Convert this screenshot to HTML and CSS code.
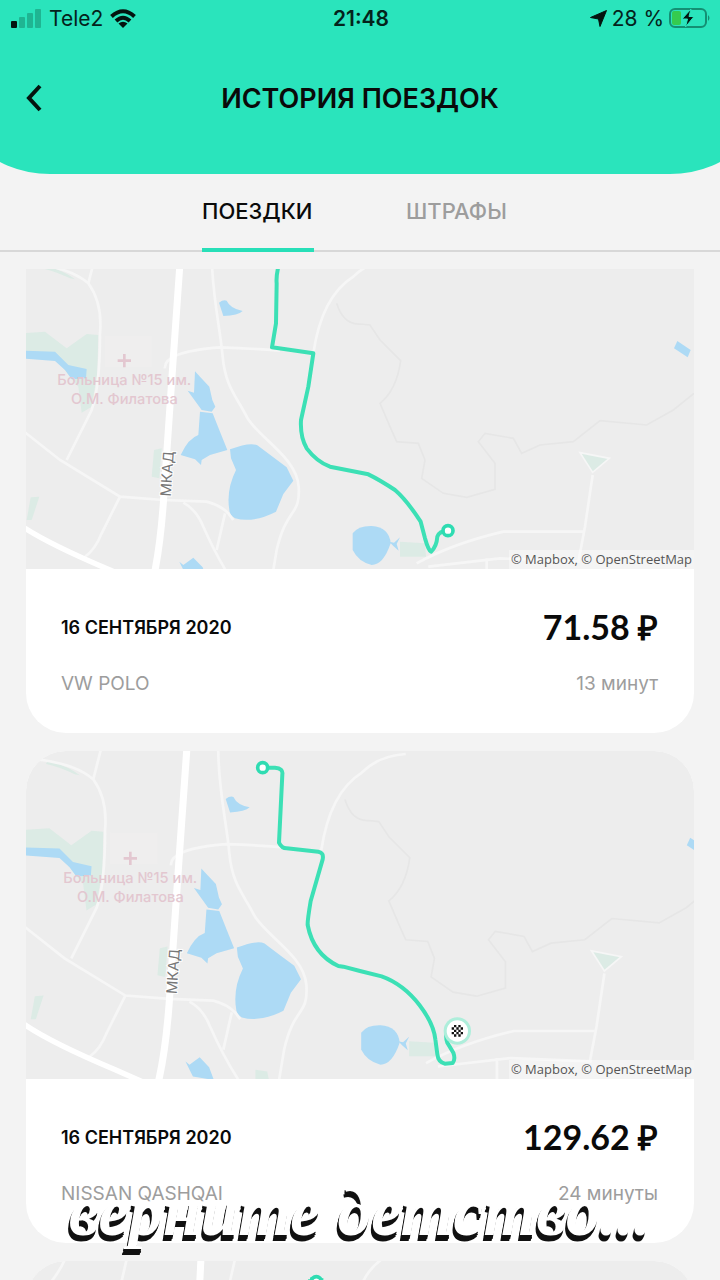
FILE: index.html
```
<!DOCTYPE html>
<html lang="ru">

<head>
    <meta charset="UTF-8">
    <meta name="viewport" content="width=device-width, initial-scale=1.0">
    <title>История поездок</title>
    <link rel="stylesheet" href="styles.css">
</head>

<body>
    <div class="app">
        <header class="header">
            <!-- Status bar -->
            <div class="status-bar">
                <div class="status-left">
                    <svg width="31" height="19" viewBox="0 0 31 19">
                        <rect x="0" y="12" width="6" height="7" rx="1" fill="#04140f" />
                        <g fill="#1fb592">
                            <rect x="8" y="8" width="6" height="11" rx="1" />
                            <rect x="16" y="4" width="6" height="15" rx="1" />
                            <rect x="24" y="0" width="6" height="19" rx="1" />
                        </g>
                    </svg>
                    <span>Tele2</span>
                    <svg width="26" height="19" viewBox="0 0 26 19">
                        <g fill="none" stroke="#04140f" stroke-width="4">
                            <path d="M1.500 7.500 Q13 -3 24.500 7.500" />
                            <path d="M6 12 Q13 5.500 20 12" />
                        </g>
                        <path d="M8.500 14.500 Q13 11 17.500 14.500 L13 19 Z" fill="#04140f" />
                    </svg>
                </div>
                <span class="status-time">21:48</span>
                <div class="status-right">
                    <svg width="17" height="17" viewBox="0 0 17 17">
                        <path d="M16.500 0.500 L10 16.500 L8.500 9 L0.500 7.500 Z" fill="#04140f" stroke="#04140f" stroke-width="1" stroke-linejoin="round" />
                    </svg>
                    <span>28 %</span>
                    <svg width="42" height="20" viewBox="0 0 42 20">
                        <rect x="1" y="1" width="36" height="18" rx="5" fill="none" stroke="#148f73" stroke-width="2" />
                        <path d="M39 7 Q42 10 39 13 Z" fill="#148f73" />
                        <rect x="3" y="3" width="9" height="14" rx="2" fill="#35cb4f" />
                        <path d="M22 1 L13 11 H18.500 L16.500 19 L25 8.500 H20 Z" fill="#04140f" stroke="#28e5bc" stroke-width="1" />
                    </svg>
                </div>
            </div>

            <div class="title-bar">
                <button class="back-btn" aria-label="Назад">
                    <svg width="16" height="28" viewBox="0 0 16 28">
                        <path d="M14 2 L3 14 L14 26" fill="none" stroke="#04140f" stroke-width="4" />
                    </svg>
                </button>
                <h1>ИСТОРИЯ ПОЕЗДОК</h1>
            </div>
        </header>

        <nav class="tabs">
            <button class="tab active">ПОЕЗДКИ</button>
            <button class="tab">ШТРАФЫ</button>
        </nav>

        <!-- Trips list -->
        <main class="trips">
            <article class="trip first">
                <div class="map">
                    <svg viewBox="18 27 2004 900">
                        <defs>
                            <g id="terrain">
                                <!-- parks -->
                                <g fill="#dcebe5">
                                    <path d="M0 220 L75 215 L140 265 L200 222 L235 225 L232 340 L215 440 L185 458 L175 380 L110 300 L0 290 Z" />
                                    <path d="M402 570 L425 565 L418 655 L395 650 Z" />
                                    <path d="M32 712 L58 710 L35 780 L20 780 Z" />
                                    <path d="M70 16 Q130 30 165 58 L150 55 Q100 32 65 25 Z" />
                                    <path d="M1140 845 L1215 850 L1218 890 L1140 890 Z" />
                                    <path d="M1680 578 L1768 595 L1718 637 Z" stroke="#f6f6f6" stroke-width="5" />
                                    <path d="M685 930 L720 935 L725 960 L685 960 Z" />
                                </g>
                                <path d="M255 228 H395 V320 H255 Z" fill="#efeeee" />
                                <!-- water -->
                                <g fill="#addaf5">
                                    <path d="M0 272 L105 275 L145 315 L200 327 L198 355 L155 358 L135 330 L105 303 L0 295 Z" />
                                    <path d="M597 128 Q610 118 620 122 Q630 145 668 153 Q655 166 610 168 Z" />
                                    <path d="M525 334 L540 350 L568 380 L577 420 L586 440 L575 455 L545 450 L527 425 L503 392 L522 398 Z" />
                                    <path d="M540 455 L578 460 L600 515 L622 570 L570 585 L545 600 L543 615 L525 598 L482 585 Q505 535 535 525 Z" />
                                    <path d="M630 568 Q690 545 712 556 L760 592 L800 622 L820 662 L790 702 L768 755 Q700 790 645 775 Q628 765 628 750 Q618 690 648 630 L633 595 Z" />
                                    <path d="M478 905 L490 915 L520 893 L548 922 L562 960 L500 950 Z" />
                                    <path d="M998 820 Q1015 797 1055 798 Q1108 802 1112 850 Q1090 915 1055 915 Q1015 905 998 870 Z" />
                                    <path d="M1108 845 L1122 848 L1140 832 L1130 852 L1136 872 L1120 858 Z" />
                                    <path d="M1972 243 L2012 270 L2003 292 L1962 265 Z" />
                                </g>
                                <!-- paths -->
                                <path class="trail" d="M950 130 Q970 195 1020 192 L1050 195 L1080 240 L1142 302 Q1130 390 1080 430 L1110 500 L1130 545 L1195 550 L1215 600 L1205 655 L1270 700 L1340 712 L1425 688 L1425 610 L1375 545 L1395 520 L1480 535 L1505 580 L1560 555 L1660 545 L1740 482 L1880 495 L1960 450 L2022 400" />
                                <!-- roads -->
                                <g class="road">
                                    <path d="M30 10 Q150 22 205 70 Q248 130 240 220 Q240 380 215 450 L140 600" />
                                    <path d="M205 70 L228 -20" />
                                    <path d="M0 505 L120 600 L300 710 L430 720 L560 725 Q600 735 625 760 L640 780" />
                                    <path d="M300 710 L245 820 Q225 870 195 890" />
                                    <path d="M490 728 Q530 750 550 800 Q590 890 635 960" />
                                    <path d="M615 760 L590 870" />
                                    <path d="M575 -20 C575 100 600 200 608 290 S650 410 680 470 S830 590 836 680 S800 740 770 870 L755 960" />
                                    <path d="M435 325 Q430 275 600 262 Q690 265 780 272" />
                                    <path d="M880 280 Q905 110 1000 50 Q1050 0 1130 -5" />
                                    <path d="M1190 910 Q1300 850 1450 815 L1690 815" />
                                    <path d="M1718 645 L1695 800 L1675 905" />
                                    <path d="M1225 920 L1440 895 L1680 905 M1400 895 V960" />
                                </g>
                                <path class="road wide" d="M0 795 Q80 850 270 930 L350 965" />
                                <path class="road highway" d="M482 -20 Q470 150 458 320 L432 700 Q422 860 398 965" />
                            </g>
                            <g id="labels">
                                <path d="M313 282 V322 M293 302 H333" stroke="#e3c7d0" stroke-width="8" />
                                <text class="hospital" x="313" y="376">Больница №15 им.</text>
                                <text class="hospital" x="313" y="432">О.М. Филатова</text>
                                <text class="road-name" transform="translate(452 710) rotate(-86)">МКАД</text>
                            </g>
                        </defs>
                        <use href="#terrain" />
                        <use href="#labels" />
                        <path class="route" d="M775 20 Q768 50 770 70 L768 190 L756 262 L880 280 L865 380 L843 480 Q840 530 860 565 Q890 605 930 620 L1045 643 Q1080 660 1125 690 Q1160 720 1202 785 L1215 835 Q1225 870 1233 875 Q1250 860 1252 830 Q1258 812 1284 812" />
                        <circle class="stop" cx="1284" cy="812" r="15" />
                    </svg>
                    <small class="attribution">© Mapbox, © OpenStreetMap</small>
                </div>
                <div class="trip-info">
                    <div class="row">
                        <span class="date">16 СЕНТЯБРЯ 2020</span>
                        <span class="price">71.58 ₽</span>
                    </div>
                    <div class="row muted">
                        <span>VW POLO</span>
                        <span>13 минут</span>
                    </div>
                </div>
            </article>

            <article class="trip">
                <div class="map">
                    <svg viewBox="18 30 2004 984">
                        <use href="#terrain" transform="translate(12 44) scale(1.0135)" />
                        <use href="#labels" transform="translate(18 50)" />
                        <path class="route" d="M728 80 L765 80 Q790 82 787 100 L777 305 Q785 322 800 322 L895 332 Q912 335 908 355 L872 480 Q862 540 863 552 Q880 640 955 675 L970 677 L1020 690 L1085 706 C1180 740 1240 840 1246 895 L1252 940 Q1255 965 1275 968 L1298 966 Q1307 955 1300 935 L1282 905 Q1276 890 1280 870" />
                        <circle class="stop" cx="728" cy="80" r="15" />
                        <!-- finish marker -->
                        <circle cx="1312" cy="870" r="41" fill="#aeeedb" />
                        <circle cx="1312" cy="870" r="32" fill="#fff" />
                        <g fill="#111">
                            <path d="M1302 852 h7 v7 h-7z M1315 852 h7 v7 h-7z M1295 859 h7 v7 h-7z M1309 859 h7 v7 h-7z M1322 859 h7 v7 h-7z M1302 866 h7 v7 h-7z M1315 866 h7 v7 h-7z M1295 873 h7 v7 h-7z M1309 873 h7 v7 h-7z M1322 873 h7 v7 h-7z M1302 880 h7 v7 h-7z M1315 880 h7 v7 h-7z" />
                        </g>
                    </svg>
                    <small class="attribution">© Mapbox, © OpenStreetMap</small>
                </div>
                <div class="trip-info">
                    <div class="row">
                        <span class="date">16 СЕНТЯБРЯ 2020</span>
                        <span class="price">129.62 ₽</span>
                    </div>
                    <div class="row muted">
                        <span>NISSAN QASHQAI</span>
                        <span>24 минуты</span>
                    </div>
                </div>
            </article>

            <article class="trip">
                <div class="map">
                    <svg viewBox="18 30 2004 984">
                        <g class="road">
                            <path d="M135 25 Q110 80 60 130" />
                            <path d="M320 25 L305 90" />
                            <path d="M645 25 L630 90" />
                            <path d="M1085 25 Q1050 50 1030 90" />
                        </g>
                        <path class="road highway" d="M543 20 L538 120" />
                        <path class="route" d="M870 150 V85 M870 85 L910 88" />
                        <circle class="stop" cx="889" cy="92" r="15" />
                    </svg>
                </div>
            </article>
        </main>

        <p class="caption">верните детство...</p>
    </div>
</body>

</html>
```
FILE: styles.css
```
* {
    margin: 0;
    padding: 0;
    box-sizing: border-box;
}

body {
    font-family: Inter, 'Noto Sans', sans-serif;
    background-color: #f3f3f3;
    color: #0a0a0a;
}

button {
    border: none;
    background: none;
    font-family: inherit;
    cursor: pointer;
}

svg {
    display: block;
}

.app {
    position: relative;
    display: flex;
    flex-direction: column;
    height: 100vh;
    overflow: hidden;
}

/* Header */
.header {
    position: relative;
    flex-shrink: 0;
    height: 174px;
    overflow: hidden;
}

/* wider than the screen, so only the end of the curve is seen */
.header::before {
    content: '';
    position: absolute;
    top: 0;
    bottom: 0;
    left: -60px;
    right: -60px;
    z-index: -1;
    background-color: #2ae4bc;
    border-radius: 0 0 110px 110px;
}

.status-bar {
    display: grid;
    grid-template-columns: 1fr auto 1fr;
    align-items: center;
    height: 36px;
    padding: 0 9px 0 11px;
    font-size: 21px;
    color: #04231b;
}

.status-left,
.status-right {
    display: flex;
    align-items: center;
    gap: 7px;
}

.status-right {
    justify-content: flex-end;
    gap: 5px;
}

.status-time {
    font-weight: 600;
}

.title-bar {
    display: grid;
    grid-template-columns: 48px 1fr 48px;
    align-items: center;
    height: 124px;
    padding: 0 10px;
}

.back-btn {
    display: flex;
    align-items: center;
    justify-content: center;
    height: 48px;
}

h1 {
    font-size: 27px;
    font-weight: 600;
    text-align: center;
}

/* Tabs */
.tabs {
    display: flex;
    flex-shrink: 0;
    justify-content: center;
    gap: 92px;
    height: 78px;
    border-bottom: 2px solid #d8d8d8;
}

.tab {
    min-width: 112px;
    height: 78px;
    border-bottom: 4px solid transparent;
    font-size: 22px;
    font-weight: 500;
    text-align: left;
    color: #9d9d9d;
}

.tab.active {
    color: #0a0a0a;
    border-color: #28dfb8;
}

/* Trips */
.trips {
    flex: 1;
    min-height: 0;
    padding: 17px 26px;
    overflow-y: auto;
    scrollbar-width: none;
}

.trip {
    margin-bottom: 18px;
    border-radius: 40px;
    background-color: #fff;
    overflow: hidden;
}

.trip.first {
    border-radius: 0 0 40px 40px;
}

.map {
    position: relative;
    background-color: #ededed;
}

.map svg {
    width: 100%;
}

.road {
    fill: none;
    stroke: #f6f6f6;
    stroke-width: 8;
}

.road.wide {
    stroke: #fff;
    stroke-width: 16;
}

.road.highway {
    stroke: #fff;
    stroke-width: 21;
}

.trail {
    fill: none;
    stroke: #e6e6e6;
    stroke-width: 5;
}

.route {
    fill: none;
    stroke: #3ce0b5;
    stroke-width: 12;
    stroke-linejoin: round;
}

.stop {
    fill: #fff;
    stroke: #2fdcb2;
    stroke-width: 11;
}

.hospital {
    font-size: 44px;
    font-weight: 500;
    text-anchor: middle;
    fill: #e3c7d0;
}

.road-name {
    font-size: 44px;
    fill: #777;
    stroke: #fff;
    stroke-width: 6;
    paint-order: stroke;
}

.attribution {
    position: absolute;
    right: 0;
    bottom: 0;
    padding: 0 2px;
    background-color: rgba(255, 255, 255, 0.4);
    font-family: 'Open Sans', sans-serif;
    font-size: 13px;
    line-height: 19px;
    color: #555;
}

.trip-info {
    display: flex;
    flex-direction: column;
    gap: 22px;
    padding: 36px 36px 38px 35px;
}

.row {
    display: flex;
    align-items: center;
    justify-content: space-between;
    height: 44px;
    font-size: 19px;
}

.row.muted {
    height: 24px;
    color: #9d9d9d;
}

.date {
    font-size: 18px;
    font-weight: 600;
}

.price {
    font-family: Lato, sans-serif;
    font-size: 34px;
    font-weight: bold;
}

/* Caption over the cards */
.caption {
    position: absolute;
    left: 0;
    right: 0;
    bottom: 28px;
    text-align: center;
    font-family: 'Liberation Serif', serif;
    font-size: 68px;
    line-height: 80px;
    font-style: italic;
    font-weight: bold;
    color: #fff;
    text-shadow: -1px 2px #111, -1px 4px #111, -2px 6px #111;
}
```
